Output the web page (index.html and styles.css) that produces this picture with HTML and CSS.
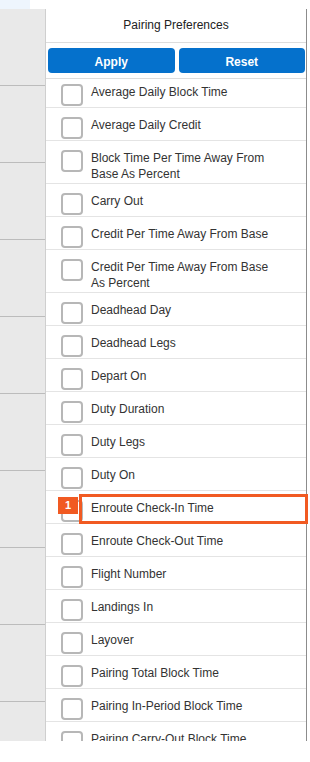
FILE: index.html
```html
<!DOCTYPE html>
<html>
<head>
  <title>Pairing Preferences</title>
  <link rel="stylesheet" href="styles.css">
</head>
<body>
  <div class="page">
    <div class="side">
      <div class="side-top"><div class="side-tab"></div></div>
      <div class="side-body">
        <div class="side-cell"></div>
        <div class="side-cell"></div>
        <div class="side-cell"></div>
        <div class="side-cell"></div>
        <div class="side-cell"></div>
        <div class="side-cell"></div>
        <div class="side-cell"></div>
        <div class="side-cell"></div>
        <div class="side-cell"></div>
      </div>
    </div>

    <div class="panel">
      <div class="panel-title">Pairing Preferences</div>
      <div class="panel-actions">
        <button class="btn">Apply</button>
        <button class="btn">Reset</button>
      </div>

      <div class="pref-list">
        <div class="pref-scroll">
          <div class="pref-row"><span class="check"></span><span class="label">Average Daily Block Time</span></div>
          <div class="pref-row"><span class="check"></span><span class="label">Average Daily Credit</span></div>
          <div class="pref-row"><span class="check"></span><span class="label">Block Time Per Time Away From Base As Percent</span></div>
          <div class="pref-row"><span class="check"></span><span class="label">Carry Out</span></div>
          <div class="pref-row"><span class="check"></span><span class="label">Credit Per Time Away From Base</span></div>
          <div class="pref-row"><span class="check"></span><span class="label">Credit Per Time Away From Base As Percent</span></div>
          <div class="pref-row"><span class="check"></span><span class="label">Deadhead Day</span></div>
          <div class="pref-row"><span class="check"></span><span class="label">Deadhead Legs</span></div>
          <div class="pref-row"><span class="check"></span><span class="label">Depart On</span></div>
          <div class="pref-row"><span class="check"></span><span class="label">Duty Duration</span></div>
          <div class="pref-row"><span class="check"></span><span class="label">Duty Legs</span></div>
          <div class="pref-row"><span class="check"></span><span class="label">Duty On</span></div>
          <div class="pref-row"><span class="check"></span><span class="label">Enroute Check-In Time</span>
            <div class="highlight"></div>
            <div class="badge">1</div>
          </div>
          <div class="pref-row"><span class="check"></span><span class="label">Enroute Check-Out Time</span></div>
          <div class="pref-row"><span class="check"></span><span class="label">Flight Number</span></div>
          <div class="pref-row"><span class="check"></span><span class="label">Landings In</span></div>
          <div class="pref-row"><span class="check"></span><span class="label">Layover</span></div>
          <div class="pref-row"><span class="check"></span><span class="label">Pairing Total Block Time</span></div>
          <div class="pref-row"><span class="check"></span><span class="label">Pairing In-Period Block Time</span></div>
          <div class="pref-row"><span class="check"></span><span class="label">Pairing Carry-Out Block Time</span></div>
        </div>
      </div>
    </div>
  </div>
</body>
</html>
```

FILE: styles.css
```css
body {
  margin: 0;
  background-color: #ffffff;
  font-family: "Liberation Sans", Arial, sans-serif;
  font-size: 12px;
  color: #333333;
}

.page {
  display: flex;
  align-items: flex-start;
}

.side {
  width: 45px;
  flex-shrink: 0;
}

.side-top {
  height: 9px;
}

.side-tab {
  width: 30px;
  height: 9px;
  background-color: #eef5fd;
}

.side-body {
  height: 732px;
  background-color: #e9e9e9;
  overflow: hidden;
}

.side-cell {
  height: 76px;
  border-bottom: 1px solid #bcbcbc;
}

.panel {
  margin-top: 9px;
  width: 260px;
  height: 732px;
  border-left: 1px solid #cfcfcf;
  border-right: 1px solid #8c8c8c;
  display: flex;
  flex-direction: column;
  background-color: #ffffff;
}

.panel-title {
  height: 33px;
  line-height: 33px;
  text-align: center;
  color: #222222;
  border-bottom: 1px solid #dddddd;
}

.panel-actions {
  display: flex;
  gap: 4px;
  padding: 5px 1px 5px 2px;
  border-bottom: 1px solid #dddddd;
}

.btn {
  flex: 1;
  height: 25px;
  padding: 2px 0 0;
  border: none;
  border-radius: 4px;
  background-color: #0571cc;
  color: #ffffff;
  font-family: "Liberation Sans", Arial, sans-serif;
  font-size: 12px;
  font-weight: bold;
  cursor: pointer;
}

/* clip bottom only, so the highlight can spill over the right border */
.pref-list {
  flex: 1;
  min-height: 0;
  clip-path: inset(0 -6px 0 0);
}

.pref-scroll {
  margin-top: -4px;
}

.pref-row {
  position: relative;
  display: flex;
  align-items: flex-start;
  gap: 8px;
  padding: 9px 28px 1px 15px;
  border-bottom: 1px solid #e4e4e4;
}

.check {
  width: 18px;
  height: 18px;
  flex-shrink: 0;
  border: 2px solid #b7b7b7;
  border-radius: 4px;
  background-color: #ffffff;
}

.label {
  line-height: 16px;
  color: #333333;
}

.highlight {
  position: absolute;
  left: 33px;
  right: -2px;
  top: 3px;
  height: 24px;
  border: 3px solid #f15a22;
}

.badge {
  position: absolute;
  left: 12px;
  top: 6px;
  width: 20px;
  height: 17px;
  line-height: 17px;
  text-align: center;
  background-color: #f15a22;
  color: #ffffff;
  font-size: 11px;
  font-weight: bold;
}
```
